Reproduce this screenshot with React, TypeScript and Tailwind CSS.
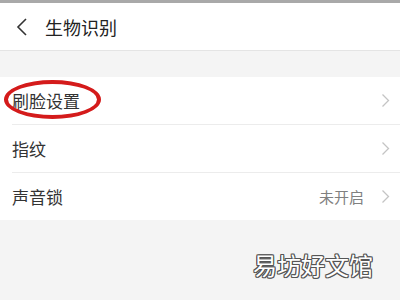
import React from "react";

const font = { fontFamily: '"Noto Sans CJK SC", "Noto Sans", sans-serif' };

const Chevron = () => (
  <svg width="9" height="15" viewBox="0 0 9 15" fill="none" className="shrink-0">
    <path d="M1.5 1.5l6 6-6 6" stroke="#c4c4c4" strokeWidth="1.3" />
  </svg>
);

interface RowProps {
  label: string;
  value?: string;
  circled?: boolean;
  last?: boolean;
}

const Row: React.FC<RowProps> = ({ label, value, circled, last }) => (
  <div className="relative bg-white">
    <div className="flex h-[47px] items-center pl-3 pr-[10px]">
      <span className="text-[17px] leading-none text-[#333]">{label}</span>
      <div className="ml-auto flex items-center gap-[17px]">
        {value && <span className="text-[15px] leading-none text-[#808080]">{value}</span>}
        <Chevron />
      </div>
    </div>
    {!last && <div className="ml-3 h-px bg-[#ececec]" />}
    {circled && (
      <div className="absolute left-[4px] top-[3px] h-[39px] w-[97px] rounded-[50%] border-4 border-[#d41b1b]" />
    )}
  </div>
);

const outline =
  "1px 0 0 #555, -1px 0 0 #555, 0 1px 0 #555, 0 -1px 0 #555, 1px 1px 0 #555, -1px -1px 0 #555, 1px -1px 0 #555, -1px 1px 0 #555";

export default function App() {
  return (
    <div className="h-[300px] w-[400px] overflow-hidden bg-[#f4f4f4]" style={font}>
      <div className="h-[3px] bg-[#a9a9a9]" />
      <div className="flex h-[48px] items-center border-b border-[#e4e4e4] bg-white">
        <svg width="12" height="18" viewBox="0 0 12 18" fill="none" className="ml-[16px]">
          <path d="M10 1L2 9l8 8" stroke="#333" strokeWidth="1.6" />
        </svg>
        <span className="ml-[17px] text-[18px] leading-none text-[#222]">生物识别</span>
      </div>
      <div className="h-[26px]" />
      <div>
        <Row label="刷脸设置" circled />
        <Row label="指纹" />
        <Row label="声音锁" value="未开启" last />
      </div>
      <div className="flex justify-end pr-[27px] pt-[33px]">
        <span className="text-[24px] leading-none text-white" style={{ textShadow: outline }}>
          易坊好文馆
        </span>
      </div>
    </div>
  );
}
